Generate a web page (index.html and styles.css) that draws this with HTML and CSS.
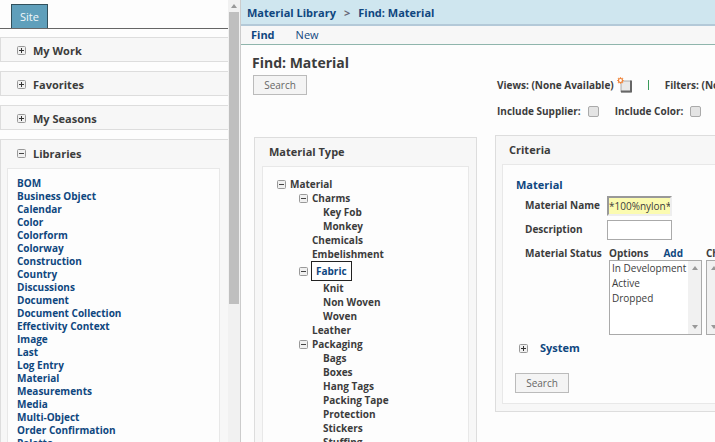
FILE: index.html
```html
<!DOCTYPE html>
<html lang="en">
<head>
<meta charset="utf-8">
<title>Find: Material</title>
<link rel="stylesheet" href="styles.css">
</head>
<body>
<svg class="defs" aria-hidden="true">
  <symbol id="plus" viewBox="0 0 9 9"><rect x=".5" y=".5" width="8" height="8" rx="1" fill="#f0f0f0" stroke="#999"/><path d="M2 4.500h5M4.500 2v5" stroke="#333"/></symbol>
  <symbol id="minus" viewBox="0 0 9 9"><rect x=".5" y=".5" width="8" height="8" rx="1" fill="#f0f0f0" stroke="#999"/><path d="M2 4.500h5" stroke="#444"/></symbol>
  <symbol id="up" viewBox="0 0 6 4"><path d="M0 4l3-4 3 4z" fill="#999"/></symbol>
  <symbol id="down" viewBox="0 0 6 4"><path d="M0 0l3 4 3-4z" fill="#999"/></symbol>
</svg>
<div class="app">
  <aside class="sidebar">
    <div class="tabs"><button class="tab" type="button">Site</button></div>
    <section class="group"><button class="group-head" type="button"><svg class="box"><use href="#plus"/></svg>My Work</button></section>
    <section class="group"><button class="group-head" type="button"><svg class="box"><use href="#plus"/></svg>Favorites</button></section>
    <section class="group"><button class="group-head" type="button"><svg class="box"><use href="#plus"/></svg>My Seasons</button></section>
    <section class="group open">
      <button class="group-head" type="button"><svg class="box"><use href="#minus"/></svg>Libraries</button>
      <ul class="links">
        <li><a href="#">BOM</a></li>
        <li><a href="#">Business Object</a></li>
        <li><a href="#">Calendar</a></li>
        <li><a href="#">Color</a></li>
        <li><a href="#">Colorform</a></li>
        <li><a href="#">Colorway</a></li>
        <li><a href="#">Construction</a></li>
        <li><a href="#">Country</a></li>
        <li><a href="#">Discussions</a></li>
        <li><a href="#">Document</a></li>
        <li><a href="#">Document Collection</a></li>
        <li><a href="#">Effectivity Context</a></li>
        <li><a href="#">Image</a></li>
        <li><a href="#">Last</a></li>
        <li><a href="#">Log Entry</a></li>
        <li><a href="#">Material</a></li>
        <li><a href="#">Measurements</a></li>
        <li><a href="#">Media</a></li>
        <li><a href="#">Multi-Object</a></li>
        <li><a href="#">Order Confirmation</a></li>
        <li><a href="#">Palette</a></li>
      </ul>
    </section>
  </aside>
  <div class="scroll"><svg class="arrow"><use href="#up"/></svg><div class="thumb"></div></div>
  <main class="main">
    <nav class="crumbs"><a href="#">Material Library</a><span>&gt;</span><a href="#">Find: Material</a></nav>
    <nav class="subnav"><a class="current" href="#">Find</a><a href="#">New</a></nav>
    <div class="content">
      <div class="left">
        <h1>Find: Material</h1>
        <button class="button" type="button">Search</button>
        <section class="panel types">
          <h2>Material Type</h2>
          <div class="panel-body">
            <ul class="tree">
              <li><div class="node"><svg class="box"><use href="#minus"/></svg>Material</div>
                <ul>
                  <li><div class="node"><svg class="box"><use href="#minus"/></svg>Charms</div>
                    <ul><li>Key Fob</li><li>Monkey</li></ul></li>
                  <li>Chemicals</li>
                  <li>Embelishment</li>
                  <li><div class="node"><svg class="box"><use href="#minus"/></svg><a class="selected" href="#">Fabric</a></div>
                    <ul><li>Knit</li><li>Non Woven</li><li>Woven</li></ul></li>
                  <li>Leather</li>
                  <li><div class="node"><svg class="box"><use href="#minus"/></svg>Packaging</div>
                    <ul><li>Bags</li><li>Boxes</li><li>Hang Tags</li><li>Packing Tape</li><li>Protection</li><li>Stickers</li><li>Stuffing</li></ul></li>
                </ul>
              </li>
            </ul>
          </div>
        </section>
      </div>
      <div class="right">
        <div class="views">
          <span>Views: (None Available)</span>
          <button class="new-view" type="button" aria-label="New view"><svg viewBox="0 0 16 16"><path d="M4 4h10v11H4z" fill="#e9e9e9" stroke="#aaa"/><path d="M14 3.500v11H4" fill="none" stroke="#666" stroke-width="2"/><path d="M3.500 0v7M0 3.500h7M1 1l5 5M6 1L1 6" stroke="#f3a064" stroke-width="1.200"/><circle cx="3.500" cy="3.500" r="2" fill="#fff" stroke="#ee8136" stroke-width="1.200"/></svg></button>
          <span class="bar"></span>
          <span>Filters: (None Available)</span>
        </div>
        <div class="includes">
          <label for="supplier">Include Supplier:</label><input id="supplier" type="checkbox">
          <label for="color">Include Color:</label><input id="color" type="checkbox">
        </div>
        <section class="panel criteria">
          <h2>Criteria</h2>
          <div class="panel-body">
            <h3>Material</h3>
            <div class="fields">
              <label for="name">Material Name</label>
              <input id="name" class="text filled" type="text" value="*100%nylon*">
              <label for="desc">Description</label>
              <input id="desc" class="text" type="text">
              <label for="status">Material Status</label>
              <div class="pickers">
                <div class="picker">
                  <div class="picker-head">Options<a href="#">Add</a></div>
                  <div class="list">
                    <select id="status" multiple size="4"><option>In Development</option><option>Active</option><option>Dropped</option></select>
                    <div class="list-scroll"><svg class="arrow"><use href="#up"/></svg><svg class="arrow"><use href="#down"/></svg></div>
                  </div>
                </div>
                <div class="picker">
                  <div class="picker-head">Chosen</div>
                  <div class="list">
                    <div class="list-scroll"><svg class="arrow"><use href="#up"/></svg><svg class="arrow"><use href="#down"/></svg></div>
                  </div>
                </div>
              </div>
            </div>
            <h3 class="system"><svg class="box"><use href="#plus"/></svg>System</h3>
            <button class="button" type="button">Search</button>
          </div>
        </section>
      </div>
    </div>
  </main>
</div>
</body>
</html>
```
FILE: styles.css
```css
* { box-sizing: border-box; }
body { margin: 0; background: #fdfdfd; color: #3c3c3c; font: 700 10px/14px "Open Sans", "Noto Sans", sans-serif; }
button, input, select { font: inherit; color: inherit; margin: 0; }
a { color: #0f477f; text-decoration: none; }
ul { list-style: none; margin: 0; padding: 0; }
h1, h2, h3 { margin: 0; }
.defs { position: absolute; width: 0; height: 0; }
.box { width: 9px; height: 9px; flex: none; }
.arrow { width: 6px; height: 4px; flex: none; }

.app { display: flex; height: 100vh; overflow: hidden; }
.sidebar { flex: 0 0 228px; overflow: hidden; }
.tabs { display: flex; height: 29px; padding: 4px 0 0 11px; margin-bottom: 8px; border-bottom: 1px solid #666; }
.tab { width: 37px; padding: 0; border: 1px solid #31505c; border-bottom: 0; background: #5f9fbb; color: #f2f8fa; font-size: 11px; font-weight: 400; }
.group { margin-bottom: 9px; background: #f7f7f7; border: 1px solid #ddd; border-width: 1px 0 1px 1px; }
.group-head { display: flex; align-items: center; gap: 7px; width: 100%; height: 23px; padding: 2px 0 0 16px; border: 0; background: none; font-size: 11px; text-align: left; }
.open .group-head { height: 28px; padding-bottom: 3px; }
.links { margin: 0 8px 0 6px; padding: 8px 0 8px 9px; border: 1px solid #e8e8e8; background: #fdfdfd; line-height: 13px; }
.scroll { flex: 0 0 12px; display: flex; flex-direction: column; align-items: center; padding-top: 4px; background: #f1f1f1; }
.thumb { width: 10px; height: 292px; margin-top: 4px; background: #bfbfbf; }

.main { flex: 1; min-width: 0; overflow: hidden; border-left: 1px solid #ccc; }
.crumbs { display: flex; align-items: center; gap: 8px; height: 26px; padding: 2px 0 0 6px; background: #cfe6ef; border-bottom: 2px solid #b3c9d8; font-size: 11px; }
.crumbs span { color: #667; }
.subnav { display: flex; align-items: center; gap: 21px; height: 19px; padding-left: 10px; background: #f7f7f7; border-bottom: 1px solid #8fb5ac; font-size: 11px; }
.subnav a { font-weight: 400; }
.subnav .current { font-weight: 700; }
.content { display: flex; gap: 18px; padding-left: 11px; }
.left { flex: 0 0 225px; padding-top: 8px; }
h1 { font-size: 14px; line-height: 20px; margin-bottom: 2px; }
.button { display: block; width: 54px; height: 20px; margin-left: 1px; padding: 0; border: 1px solid #bbb; background: #f4f4f4; color: #666; font-weight: 400; }
.panel { background: #f7f7f7; border: 1px solid #ddd; }
.panel h2 { font-size: 11px; line-height: 16px; }
.panel-body { background: #fdfdfd; border: 1px solid #e8e8e8; }
.types { margin: 42px 0 0 2px; padding: 6px 7px; }
.types h2 { margin: 0 0 6px 7px; }
.tree { padding: 10px 0 10px 27px; }
.tree ul { padding-left: 22px; }
.tree ul ul { padding-left: 11px; }
.node { display: flex; align-items: center; gap: 4px; margin-left: -13px; }
.selected { border: 1px solid #222; padding: 2px 4px; margin-left: -1px; background: #fff; }

.right { flex: 1; min-width: 0; padding-top: 30px; white-space: nowrap; }
.views { display: flex; align-items: center; height: 20px; padding-left: 2px; }
.new-view { flex: none; width: 16px; height: 16px; margin-left: 3px; padding: 0; border: 0; background: none; }
.new-view svg { display: block; width: 16px; height: 16px; }
.bar { flex: none; width: 1px; height: 10px; margin: 0 16px 0 15px; background: #3a9a5a; }
.includes { display: flex; align-items: center; height: 20px; margin-top: 6px; padding-left: 2px; }
.includes input { flex: none; appearance: none; width: 11px; height: 11px; margin: 0 16px 0 7px; border: 1px solid #aaa; border-radius: 2px; background: #e4e4e4; }
.criteria { margin-top: 14px; padding: 6px 0 7px 6px; border-right: 0; }
.criteria h2 { margin: 0 0 6px 7px; }
.criteria .panel-body { padding: 12px 0 10px 13px; border-right: 0; }
h3 { color: #0f477f; font-size: 11px; line-height: 16px; }
.fields { display: grid; grid-template-columns: 82px 1fr; row-gap: 4px; padding: 3px 0 0 9px; }
.fields label { padding-top: 2px; }
.text { width: 65px; height: 20px; padding: 0 2px; border: 1px solid #aaa; background: #fff; font-weight: 400; }
.filled { border: 2px solid #999; border-right-color: #eee; border-bottom-color: #eee; background: #fbfbb0; padding: 0; }
.pickers { display: flex; gap: 4px; padding: 2px 0 0 2px; }
.picker-head { display: flex; gap: 15px; height: 14px; }
.list { display: flex; width: 93px; height: 75px; border: 1px solid #aaa; background: #fff; }
.list select { flex: 1; min-width: 0; padding: 0; border: 0; outline: 0; background: none; overflow: hidden; font-weight: 400; }
.list option { padding: 0 2px; min-height: 15px; line-height: 15px; }
.list-scroll { flex: 0 0 13px; display: flex; flex-direction: column; align-items: center; justify-content: space-between; padding: 5px 0; background: #f1f1f1; }
.system { display: flex; align-items: center; gap: 12px; margin: 5px 0 17px 3px; }
.criteria .button { margin-left: -1px; }
```
